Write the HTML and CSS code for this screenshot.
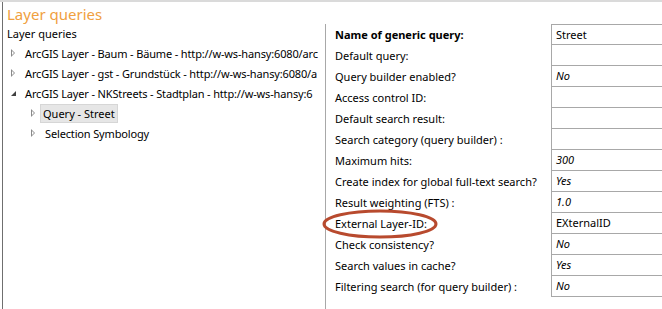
FILE: index.html
```html
<!DOCTYPE html>
<html lang="en">
<head>
    <meta charset="UTF-8">
    <title>Layer queries</title>
    <link rel="stylesheet" href="styles.css">
</head>
<body>
    <div class="topbar"></div>
    <div class="main">
        <div class="left">
            <h1 class="title">Layer queries</h1>
            <div class="tree">
                <div class="tree-caption">Layer queries</div>
                <div class="node"><span class="arrow"></span><span class="node-text">ArcGIS Layer - Baum - Bäume - http://w-ws-hansy:6080/arc</span></div>
                <div class="node"><span class="arrow"></span><span class="node-text">ArcGIS Layer - gst - Grundstück - http://w-ws-hansy:6080/a</span></div>
                <div class="node"><span class="arrow open"></span><span class="node-text">ArcGIS Layer - NKStreets - Stadtplan - http://w-ws-hansy:6</span></div>
                <div class="node child"><span class="arrow"></span><span class="node-text selected">Query - Street</span></div>
                <div class="node child"><span class="arrow"></span><span class="node-text">Selection Symbology</span></div>
            </div>
        </div>
        <div class="right">
            <div class="props">
                <div class="label bold">Name of generic query:</div><div class="value">Street</div>
                <div class="label">Default query:</div><div class="value"></div>
                <div class="label">Query builder enabled?</div><div class="value italic">No</div>
                <div class="label">Access control ID:</div><div class="value"></div>
                <div class="label">Default search result:</div><div class="value"></div>
                <div class="label">Search category (query builder) :</div><div class="value"></div>
                <div class="label">Maximum hits:</div><div class="value italic">300</div>
                <div class="label">Create index for global full-text search?</div><div class="value italic">Yes</div>
                <div class="label">Result weighting (FTS) :</div><div class="value italic">1.0</div>
                <div class="label">External Layer-ID:</div><div class="value">EXternalID</div>
                <div class="label">Check consistency?</div><div class="value italic">No</div>
                <div class="label">Search values in cache?</div><div class="value italic">Yes</div>
                <div class="label">Filtering search (for query builder) :</div><div class="value italic">No</div>
            </div>
            <svg class="marker" width="124" height="38" viewBox="0 0 124 38">
                <ellipse cx="58" cy="17" rx="56" ry="13" fill="none" stroke="#b84a2e" stroke-width="3"/>
            </svg>
        </div>
    </div>
</body>
</html>
```

FILE: styles.css
```css
body {
    margin: 0;
    font-family: "Noto Sans", sans-serif;
    font-size: 11px;
    color: #000;
    background: #fff;
    overflow: hidden;
}
.topbar {
    height: 2px;
    background-color: #dadada;
}
.main {
    display: flex;
    height: 307px;
}
.left {
    width: 323px;
    margin-left: 2px;
    border-left: 1px solid #6f6f6f;
    display: flex;
    flex-direction: column;
}
.title {
    margin: 0;
    padding-left: 4px;
    height: 22px;
    font-size: 15px;
    font-weight: normal;
    line-height: 24px;
    color: #f0a040;
}
.tree {
    flex: 1;
    border-right: 1px solid #a8a8a8;
    padding-top: 1px;
}
.tree-caption {
    padding-left: 4px;
    height: 18px;
    line-height: 18px;
}
.node {
    display: flex;
    align-items: center;
    height: 20px;
    padding-left: 5px;
    white-space: nowrap;
    overflow: hidden;
    margin-right: 1px;
}
.node.child {
    padding-left: 25px;
}
.arrow {
    width: 0;
    height: 0;
    border-top: 4px solid transparent;
    border-bottom: 4px solid transparent;
    border-left: 4px solid #8a8a8a;
    position: relative;
    margin-left: 3px;
    margin-right: 8px;
    flex-shrink: 0;
}
.arrow::after {
    content: "";
    position: absolute;
    left: -4px;
    top: -2px;
    border-top: 2px solid transparent;
    border-bottom: 2px solid transparent;
    border-left: 2px solid #fff;
    transform: translateX(1px);
}
.arrow.open {
    border: none;
    width: 0;
    height: 0;
    border-bottom: 5px solid #404040;
    border-left: 5px solid transparent;
    margin-left: 3px;
    margin-right: 7px;
}
.arrow.open::after {
    display: none;
}
.node-text {
    padding: 1px 2px;
    line-height: 17px;
    letter-spacing: -0.15px;
}
.node-text.selected {
    background-color: #e6e6e6;
    border: 1px solid #d6d6d6;
    padding: 0 2px;
    margin-left: -3px;
    letter-spacing: 0;
}
.right {
    flex: 1;
    position: relative;
    padding-top: 22px;
}
.props {
    display: grid;
    grid-template-columns: 225px 1fr;
    grid-auto-rows: 21px;
}
.label {
    padding-left: 9px;
    line-height: 22px;
    white-space: nowrap;
}
.bold {
    font-weight: bold;
}
.value {
    border-left: 1px solid #a8a8a8;
    border-bottom: 1px solid #a8a8a8;
    padding-left: 4px;
    line-height: 20px;
}
.props .value:nth-child(2) {
    border-top: 1px solid #a8a8a8;
    line-height: 19px;
}
.italic {
    font-style: italic;
}
.marker {
    position: absolute;
    left: -4px;
    top: 205px;
}
```
